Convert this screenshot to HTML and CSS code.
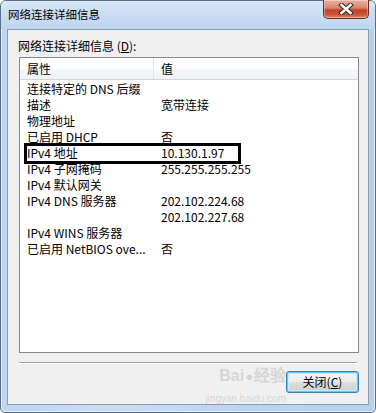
FILE: index.html
```html
<!DOCTYPE html>
<html lang="zh-CN">
<head>
<meta charset="utf-8">
<title>网络连接详细信息</title>
<link rel="stylesheet" href="styles.css">
</head>
<body>
<div class="window">
  <div class="titlebar">
    <span class="title">网络连接详细信息</span>
    <button class="close" aria-label="关闭">
      <svg width="16" height="12" viewBox="0 0 16 12">
        <path d="M3.5 2 L12.5 10 M12.5 2 L3.5 10" stroke="#3a2a2a" stroke-width="4.6" stroke-linecap="square"/>
        <path d="M3.5 2 L12.5 10 M12.5 2 L3.5 10" stroke="#ffffff" stroke-width="2.6" stroke-linecap="square"/>
      </svg>
    </button>
  </div>
  <div class="client">
    <div class="label">网络连接详细信息 (<u>D</u>):</div>
    <div class="listbox">
      <div class="header">
        <div class="hcell prop">属性</div>
        <div class="hcell val">值</div>
      </div>
      <div class="rows">
        <div class="row"><span class="k">连接特定的 DNS 后缀</span><span class="v"></span></div>
        <div class="row"><span class="k">描述</span><span class="v">宽带连接</span></div>
        <div class="row"><span class="k">物理地址</span><span class="v"></span></div>
        <div class="row"><span class="k">已启用 DHCP</span><span class="v">否</span></div>
        <div class="row"><span class="k">IPv4 地址</span><span class="v">10.130.1.97</span></div>
        <div class="row"><span class="k">IPv4 子网掩码</span><span class="v">255.255.255.255</span></div>
        <div class="row"><span class="k">IPv4 默认网关</span><span class="v"></span></div>
        <div class="row"><span class="k">IPv4 DNS 服务器</span><span class="v">202.102.224.68</span></div>
        <div class="row"><span class="k"></span><span class="v">202.102.227.68</span></div>
        <div class="row"><span class="k">IPv4 WINS 服务器</span><span class="v"></span></div>
        <div class="row"><span class="k">已启用 NetBIOS ove...</span><span class="v">否</span></div>
      </div>
      <div class="highlight"></div>
    </div>
    <div class="separator"></div>
    <div class="footer">
      <button class="btn">关闭(<u>C</u>)</button>
    </div>
    <div class="watermark">
      <span class="wm-logo">Bai<span class="paw">●</span>经验</span>
      <span class="wm-url">jingyan.baidu.com</span>
    </div>
  </div>
</div>
</body>
</html>
```
FILE: styles.css
```css
* { box-sizing: border-box; }
html, body { margin: 0; padding: 0; }
body {
  width: 376px;
  height: 413px;
  overflow: hidden;
  background: #ffffff;
  font-family: "Noto Sans CJK SC", "Noto Sans", sans-serif;
  font-size: 12px;
  color: #000;
}
.window {
  width: 376px;
  height: 413px;
  display: flex;
  flex-direction: column;
  border: 1px solid #5b6f8a;
  border-radius: 6px 6px 5px 5px;
  background: linear-gradient(to right, #bfd6f1 0%, #c9ddf4 30%, #bcd3ef 70%, #b9d1ee 100%);
  box-shadow: inset 0 0 0 1px #e3eefa;
}
.titlebar {
  height: 28px;
  display: flex;
  align-items: flex-start;
  justify-content: space-between;
  padding-left: 7px;
  background: linear-gradient(to bottom, #d9e7f8 0%, #c6dbf3 60%, #c0d7f1 100%);
  border-radius: 5px 5px 0 0;
}
.title {
  margin-top: 5px;
  font-size: 11.5px;
  line-height: 16px;
  color: #000;
}
.close {
  width: 46px;
  height: 19px;
  margin: -1px 6px 0 0;
  padding: 0;
  border: 1px solid #6b2a24;
  border-top: none;
  border-radius: 0 0 5px 5px;
  background: linear-gradient(to bottom, #eab0a2 0%, #d9836f 45%, #c4412a 55%, #cc5236 80%, #e0876a 100%);
  box-shadow: inset 0 0 0 1px rgba(255,255,255,0.35);
  display: flex;
  align-items: center;
  justify-content: center;
}
.client {
  position: relative;
  flex: 1;
  margin: 0 6px 7px 6px;
  border: 1px solid #8b9db4;
  background: #f0f0f0;
  padding: 8px 9px 0 11px;
  display: flex;
  flex-direction: column;
}
.label {
  line-height: 16px;
  margin-left: -1px;
  font-size: 12px;
}
.label u { text-decoration: underline; }
.listbox {
  position: relative;
  margin-top: 3px;
  height: 296px;
  border: 1px solid #828790;
  background: #ffffff;
}
.header {
  height: 22px;
  display: grid;
  grid-template-columns: 134px 1fr;
  background: linear-gradient(to bottom, #ffffff 0%, #ffffff 50%, #f5f6f7 60%, #f1f2f4 100%);
  border-bottom: 1px solid #d5d5d5;
}
.hcell {
  line-height: 21px;
  padding-left: 7px;
  font-size: 12px;
}
.hcell.prop { border-right: 1px solid #e3e5e8; }
.rows {
  padding-top: 1px;
}
.row {
  height: 16px;
  display: grid;
  grid-template-columns: 141px 1fr;
  line-height: 16px;
  font-size: 12px;
  white-space: nowrap;
}
.row .k { padding-left: 7px; }
.highlight {
  position: absolute;
  left: 4px;
  top: 85px;
  width: 217px;
  height: 21px;
  border: 3px solid #000;
}
.separator {
  margin-top: 9px;
  margin-right: 2px;
  height: 1px;
  background: #a0a0a0;
  border-bottom: 1px solid #ffffff;
  box-sizing: content-box;
}
.footer {
  display: flex;
  justify-content: flex-end;
  margin-top: 7px;
}
.btn {
  width: 73px;
  height: 22px;
  padding: 0;
  font-family: "Noto Sans CJK SC", "Noto Sans", sans-serif;
  font-size: 12px;
  line-height: 18px;
  color: #000;
  border: 1px solid #3c7fb1;
  border-radius: 3px;
  background: linear-gradient(to bottom, #f4f4f4 0%, #ececec 48%, #dedede 52%, #d0d0d0 100%);
  box-shadow: inset 0 0 0 1px #5fc8f5, inset 0 0 0 2px #c6ecfc;
}
.watermark {
  position: absolute;
  left: 196px;
  top: 336px;
  width: 82px;
  display: flex;
  flex-direction: column;
  align-items: flex-end;
  color: rgba(190, 190, 190, 0.55);
  pointer-events: none;
}
.wm-logo {
  font-family: "Liberation Sans", sans-serif;
  font-size: 16px;
  font-weight: bold;
  line-height: 20px;
  white-space: nowrap;
}
.paw { font-size: 13px; margin: 0 1px; }
.wm-url {
  font-family: "Liberation Sans", sans-serif;
  font-size: 10px;
  line-height: 12px;
  margin-top: 6px;
  white-space: nowrap;
}
```
